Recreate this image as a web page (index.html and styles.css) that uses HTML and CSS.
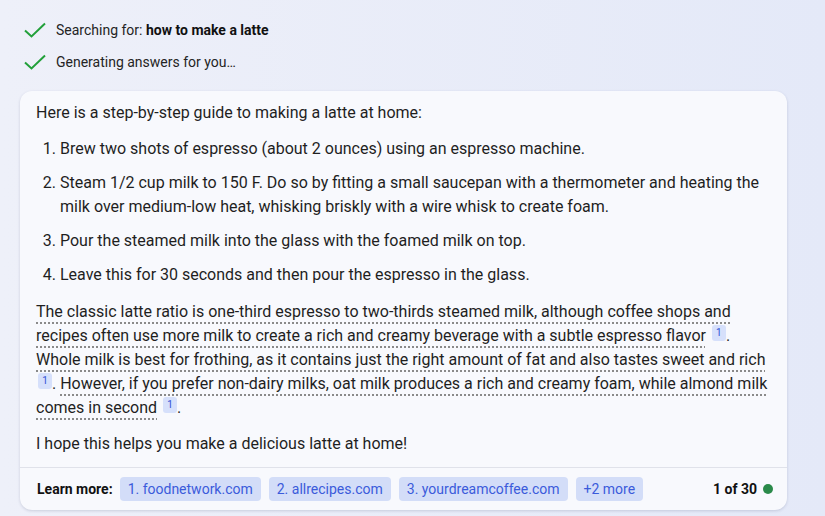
FILE: index.html
```html
<!DOCTYPE html>
<html>
    <head>
        <title>Latte answer</title>
        <link rel="stylesheet" href="styles.css">
    </head>
    <body>
        <div class="status">
            <div class="status-row">
                <svg class="check" viewBox="0 0 22 16" width="22" height="16"><path d="M1 8.5 L7.5 14.5 L21 1.5" fill="none" stroke="#22a03a" stroke-width="2"/></svg>
                <span>Searching for: <strong>how to make a latte</strong></span>
            </div>
            <div class="status-row">
                <svg class="check" viewBox="0 0 22 16" width="22" height="16"><path d="M1 8.5 L7.5 14.5 L21 1.5" fill="none" stroke="#22a03a" stroke-width="2"/></svg>
                <span>Generating answers for you…</span>
            </div>
        </div>

        <div class="card">
            <div class="answer">
                <p>Here is a step-by-step guide to making a latte at home:</p>
                <ol>
                    <li>Brew two shots of espresso (about 2 ounces) using an espresso machine.</li>
                    <li>Steam 1/2 cup milk to 150 F. Do so by fitting a small saucepan with a thermometer and heating the milk over medium-low heat, whisking briskly with a wire whisk to create foam.</li>
                    <li>Pour the steamed milk into the glass with the foamed milk on top.</li>
                    <li>Leave this for 30 seconds and then pour the espresso in the glass.</li>
                </ol>
                <p><span class="cited">The classic latte ratio is one-third espresso to two-thirds steamed milk, although coffee shops and recipes often use more milk to create a rich and creamy beverage with a subtle espresso flavor</span> <sup class="ref">1</sup>. <span class="cited">Whole milk is best for frothing, as it contains just the right amount of fat and also tastes sweet and rich</span> <sup class="ref">1</sup>. <span class="cited">However, if you prefer non-dairy milks, oat milk produces a rich and creamy foam, while almond milk comes in second</span> <sup class="ref">1</sup>.</p>
                <p>I hope this helps you make a delicious latte at home!</p>
            </div>
            <div class="footer">
                <span class="learn">Learn more:</span>
                <a class="chip">1. foodnetwork.com</a>
                <a class="chip">2. allrecipes.com</a>
                <a class="chip">3. yourdreamcoffee.com</a>
                <a class="chip">+2 more</a>
                <span class="count">1 of 30 <span class="dot"></span></span>
            </div>
        </div>
    </body>
</html>
```

FILE: styles.css
```css
body { margin: 0; padding: 14px 38px 0 20px; font-family: Roboto, "Noto Sans", sans-serif; color: #1f1f1f; background: linear-gradient(90deg, #eef0f9 0%, #e4e9f8 100%); height: 516px; box-sizing: border-box; overflow: hidden; }
.status { padding-left: 4px; }
.status-row { display: flex; align-items: center; gap: 10px; height: 32px; font-size: 14px; color: #242424; }
.status-row strong { font-weight: 700; color: #111; }
.check { flex: none; }
.card { margin-top: 13px; background: #f8f9fd; border-radius: 12px; box-shadow: 0 1px 3px rgba(60, 70, 110, 0.2); }
.answer { padding: 10px 16px 11px; font-size: 16px; line-height: 24px; }
.answer p { margin: 0 0 12px; }
.answer p:last-child { margin-bottom: 0; }
ol { margin: 0 0 13px; padding-left: 24px; }
li { margin-bottom: 10px; }
li:last-child { margin-bottom: 0; }
.cited { text-decoration: underline dotted #8a8a8a; text-decoration-thickness: 1.5px; text-underline-offset: 5px; }
.ref { display: inline-block; vertical-align: 5px; font-size: 10px; line-height: 16px; min-width: 14px; text-align: center; background: #d6e0fb; color: #2f52d6; border-radius: 3px; margin-left: 2px; }
.footer { display: flex; align-items: center; gap: 8px; height: 42px; padding: 0 17px; border-top: 1px solid #e0e2ea; font-size: 14px; }
.learn { font-weight: 700; color: #111; margin-right: -1px; }
.chip { background: #d3ddf8; color: #3b5bdb; border-radius: 4px; padding: 0 8px; line-height: 24px; }
.count { margin-left: auto; font-weight: 700; color: #111; display: flex; align-items: center; gap: 6px; margin-right: -3px; }
.dot { width: 10px; height: 10px; border-radius: 50%; background: #2a8a4a; }
```
